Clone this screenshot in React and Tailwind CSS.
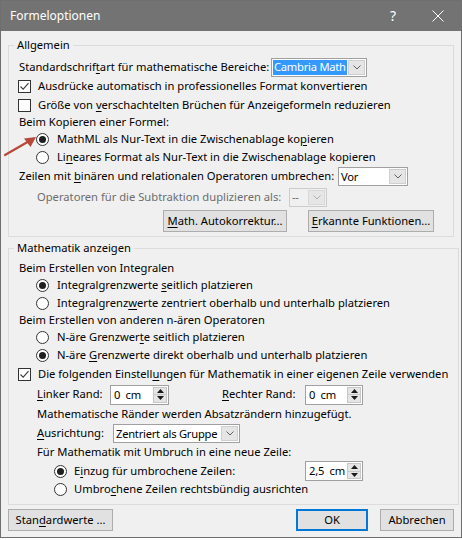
import React from "react";

// Access-key letter, drawn underlined like a Win32 dialog mnemonic
function U({ children }) {
  return <span className="underline decoration-1 underline-offset-[2px]">{children}</span>;
}

function Check({ checked }) {
  return (
    <span className="-ml-px flex h-[13px] w-[13px] shrink-0 items-center justify-center border border-[#333333] bg-white">
      {checked && (
        <svg width="11" height="11" viewBox="0 0 11 11">
          <path d="M1.5 5.5 L4.2 8.2 L9.5 2.2" fill="none" stroke="#3c3c3c" strokeWidth="1.1" />
        </svg>
      )}
    </span>
  );
}

function Radio({ checked }) {
  return (
    <span className="flex h-[13px] w-[13px] shrink-0 items-center justify-center rounded-full border border-[#333333] bg-white">
      {checked && <span className="h-[7px] w-[7px] rounded-full bg-[#1f1f1f]" />}
    </span>
  );
}

function Chevron({ color = "#606060" }) {
  return (
    <svg width="8" height="5" viewBox="0 0 8 5">
      <path d="M0.5 0.5 L4 4 L7.5 0.5" fill="none" stroke={color} strokeWidth="1" />
    </svg>
  );
}

function Combo({ value, className, selected, disabled }) {
  return (
    <div
      className={
        "flex h-[19px] shrink-0 items-stretch border p-px " +
        (disabled ? "border-[#cccccc] bg-[#f0f0f0] text-[#6d6d6d]" : "border-[#a0a0a0] bg-white") +
        " " +
        className
      }
    >
      <div className="flex min-w-0 flex-1 items-center overflow-hidden">
        <span
          className={
            "flex h-full items-center px-[1px] leading-none tracking-[-0.25px] " +
            (selected ? "bg-[#3399ff] text-white" : "")
          }
        >
          {value}
        </span>
      </div>
      <div
        className={
          "flex w-[17px] shrink-0 items-center justify-center border " +
          (disabled ? "border-[#d9d9d9] bg-[#e6e6e6]" : "border-[#cfcfcf] bg-[#e5e5e5]")
        }
      >
        <Chevron color={disabled ? "#b0b0b0" : "#606060"} />
      </div>
    </div>
  );
}

function Spin({ value, className }) {
  return (
    <div className={"flex h-[20px] shrink-0 items-stretch border border-[#a0a0a0] bg-white p-px " + className}>
      <div className="flex min-w-0 flex-1 items-center whitespace-pre pl-[2px] leading-none tracking-[-0.2px]">
        {value}
      </div>
      <div className="flex w-[14px] shrink-0 flex-col border border-[#c8c8c8] bg-[#e5e5e5]">
        <div className="flex flex-1 items-center justify-center border-b border-[#c8c8c8]">
          <svg width="7" height="4" viewBox="0 0 7 4">
            <path d="M0 4 L3.5 0 L7 4 Z" fill="#1a1a1a" />
          </svg>
        </div>
        <div className="flex flex-1 items-center justify-center">
          <svg width="7" height="4" viewBox="0 0 7 4">
            <path d="M0 0 L3.5 4 L7 0 Z" fill="#1a1a1a" />
          </svg>
        </div>
      </div>
    </div>
  );
}

function Button({ children, className, primary }) {
  return (
    <div
      className={
        "flex h-[22px] shrink-0 items-center justify-center bg-[#e1e1e1] leading-none " +
        (primary ? "border-2 border-[#0078d7]" : "border border-[#adadad]") +
        " " +
        className
      }
    >
      {children}
    </div>
  );
}

export default function App() {
  return (
    <div className="h-[540px] w-[462px] whitespace-nowrap bg-white font-['Noto_Sans',sans-serif] text-[11.2px] text-black">
      <div className="relative flex h-[538px] w-[462px] flex-col border border-[#6f6f6f] bg-[#f0f0f0]">
        {/* title bar */}
        <div className="flex h-[30px] shrink-0 items-center bg-[#737373] pl-[9px] text-white">
          <span className="text-[12px]">Formeloptionen</span>
          <span className="ml-auto mr-[36px] text-[14px] leading-none">?</span>
          <svg className="mr-[17px]" width="12" height="12" viewBox="0 0 12 12">
            <path d="M0.5 0.5 L11.5 11.5 M11.5 0.5 L0.5 11.5" stroke="#ffffff" strokeWidth="1" />
          </svg>
        </div>

        {/* Allgemein */}
        <fieldset className="mx-[7px] mt-[6px] border border-[#dcdcdc] px-[10px] pt-[4px] pb-[4px]">
          <legend className="-ml-[5px] px-[3px] leading-[16px]">Allgemein</legend>
          <div className="flex h-[20px] items-center">
            <span className="w-[252px] shrink-0">
              Standardschrif<U>t</U>art für mathematische Bereiche:
            </span>
            <Combo value="Cambria Math" selected className="w-[96px]" />
          </div>
          <div className="flex h-[19px] items-center gap-[7px]">
            <Check checked />
            <span>Ausdrücke automatisch in professionelles Format konvertieren</span>
          </div>
          <div className="flex h-[18px] items-center gap-[7px]">
            <Check />
            <span>
              Größe von <U>v</U>erschachtelten Brüchen für Anzeigeformeln reduzieren
            </span>
          </div>
          <div className="flex h-[16px] items-center">Beim Kopieren einer Formel:</div>
          <div className="flex h-[18px] items-center gap-[8px] pl-[17px]">
            <Radio checked />
            <span>
              MathML als Nur-Text in die Zwischenablage ko<U>p</U>ieren
            </span>
          </div>
          <div className="flex h-[18px] items-center gap-[8px] pl-[17px]">
            <Radio />
            <span>
              Li<U>n</U>eares Format als Nur-Text in die Zwischenablage kopieren
            </span>
          </div>
          <div className="flex h-[21px] items-center">
            <span>
              Zeilen mit <U>b</U>inären und relationalen Operatoren umbrechen:
            </span>
            <Combo value="Vor" className="ml-auto mr-[35px] w-[70px]" />
          </div>
          <div className="flex h-[20px] items-center pl-[18px] text-[#6d6d6d]">
            <span className="w-[252px] shrink-0">Operatoren für die Subtraktion duplizieren als:</span>
            <Combo value="--" disabled className="w-[38px]" />
          </div>
          <div className="mt-[3px] flex items-center pl-[144px]">
            <Button className="w-[124px]">
              <span>
                <U>M</U>ath. Autokorrektur...
              </span>
            </Button>
            <Button className="ml-[21px] w-[126px]">
              <span>
                <U>E</U>rkannte Funktionen...
              </span>
            </Button>
          </div>
        </fieldset>

        {/* Mathematik anzeigen */}
        <fieldset className="mx-[7px] mt-[3px] border border-[#dcdcdc] px-[10px] pt-[3px] pb-[6px]">
          <legend className="-ml-[5px] px-[3px] leading-[16px]">Mathematik anzeigen</legend>
          <div className="flex h-[18px] items-center">Beim Erstellen von Integralen</div>
          <div className="flex h-[17px] items-center gap-[8px] pl-[17px]">
            <Radio checked />
            <span>
              Integralgrenzwerte <U>s</U>eitlich platzieren
            </span>
          </div>
          <div className="flex h-[18px] items-center gap-[8px] pl-[17px]">
            <Radio />
            <span>
              Integralgrenz<U>w</U>erte zentriert oberhalb und unterhalb platzieren
            </span>
          </div>
          <div className="flex h-[16px] items-center">Beim Erstellen von anderen n-ären Operatoren</div>
          <div className="flex h-[18px] items-center gap-[8px] pl-[17px]">
            <Radio />
            <span>
              N-äre Grenzwer<U>t</U>e seitlich platzieren
            </span>
          </div>
          <div className="flex h-[18px] items-center gap-[8px] pl-[17px]">
            <Radio checked />
            <span>
              N-äre <U>G</U>renzwerte direkt oberhalb und unterhalb platzieren
            </span>
          </div>
          <div className="flex h-[20px] items-center gap-[7px]">
            <Check checked />
            <span>
              Die folgenden Einstell<U>u</U>ngen für Mathematik in einer eigenen Zeile verwenden
            </span>
          </div>
          <div className="flex h-[21px] items-center pl-[18px]">
            <span className="w-[73px] shrink-0">
              <U>L</U>inker Rand:
            </span>
            <Spin value="0  cm" className="w-[59px]" />
            <span className="ml-[53px] w-[83px] shrink-0">
              <U>R</U>echter Rand:
            </span>
            <Spin value="0  cm" className="w-[58px]" />
          </div>
          <div className="flex h-[19px] items-center pl-[18px]">
            Mathematische Ränder werden Absatzrändern hinzugefügt.
          </div>
          <div className="flex h-[19px] items-center pl-[18px]">
            <span className="w-[76px] shrink-0">
              <U>A</U>usrichtung:
            </span>
            <Combo value="Zentriert als Gruppe" className="w-[127px]" />
          </div>
          <div className="flex h-[18px] items-center pl-[18px]">
            Für Mathematik mit Umbruch in eine neue Zeile:
          </div>
          <div className="flex h-[20px] items-center pl-[35px]">
            <Radio checked />
            <span className="ml-[7px] w-[231px] shrink-0">
              E<U>i</U>nzug für umbrochene Zeilen:
            </span>
            <Spin value="2,5  cm" className="w-[58px]" />
          </div>
          <div className="flex h-[17px] items-center gap-[7px] pl-[35px]">
            <Radio />
            <span>
              Umbro<U>c</U>hene Zeilen rechtsbündig ausrichten
            </span>
          </div>
        </fieldset>

        {/* dialog buttons */}
        <div className="mt-[4px] flex items-center px-[7px]">
          <Button className="w-[105px]">
            <span>
              Stan<U>d</U>ardwerte ...
            </span>
          </Button>
          <Button primary className="ml-auto w-[72px]">
            OK
          </Button>
          <Button className="ml-[12px] w-[74px]">Abbrechen</Button>
        </div>

        {/* annotation arrow pointing at the MathML option */}
        <svg className="pointer-events-none absolute left-[2px] top-[132px]" width="36" height="26" viewBox="0 0 36 26">
          <path d="M2 22 L28 7" stroke="#b9473a" strokeWidth="2.2" strokeLinecap="round" fill="none" />
          <path d="M33 4 L21 5.5 L27.5 14 Z" fill="#b9473a" />
        </svg>
      </div>
    </div>
  );
}
